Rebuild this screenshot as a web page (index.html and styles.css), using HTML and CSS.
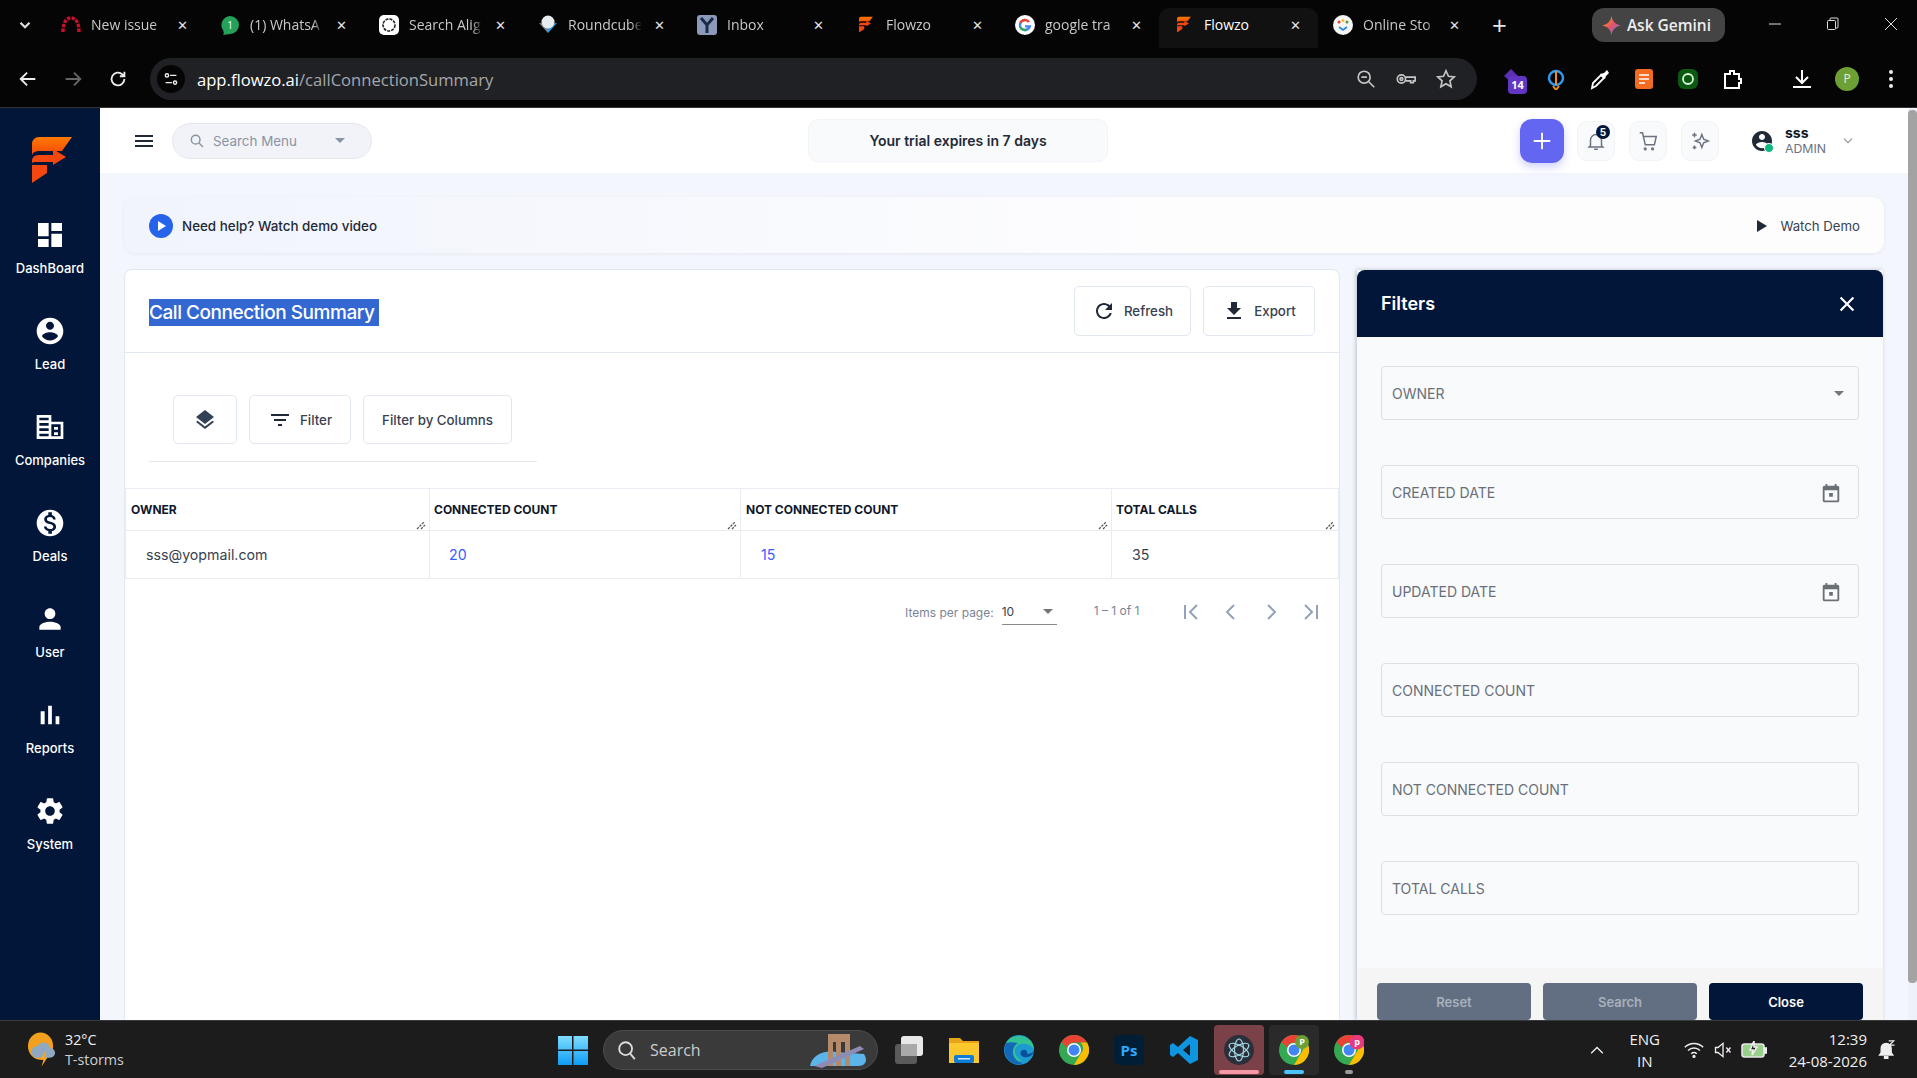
FILE: index.html
```html
<!DOCTYPE html>
<html lang="en">

<head>
  <meta charset="UTF-8">
  <title>Flowzo - Call Connection Summary</title>
  <link rel="stylesheet" href="styles.css">
</head>

<body>
  <!-- browser window -->
  <header class="browser">
    <div class="tabstrip">
      <svg class="tabs-menu" viewBox="0 0 24 24"><path d="M6 9l6 6 6-6" /></svg>
      <div class="tab"><svg class="fav" viewBox="0 0 20 20"><path d="M2 17C2 8 5 3 10 3s8 5 8 14" fill="none" stroke="#c8102e" stroke-width="3.4" stroke-dasharray="3.4 1.2" /></svg><span class="tab-title">New issue</span><span class="tab-x">✕</span></div>
      <div class="tab"><svg class="fav" viewBox="0 0 20 20"><path d="M10 1a9 9 0 0 1 0 18c-2 0-5 1-7 1 1-1 1-3 0-5A9 9 0 0 1 10 1z" fill="#25a25a" /><text x="10" y="14" class="fav-num">1</text></svg><span class="tab-title">(1) WhatsA</span><span class="tab-x">✕</span></div>
      <div class="tab"><svg class="fav" viewBox="0 0 20 20"><rect width="20" height="20" rx="5" fill="#fff" /><circle cx="10" cy="10" r="6" fill="none" stroke="#222" stroke-width="1.6" stroke-dasharray="3 1" /></svg><span class="tab-title">Search Alig</span><span class="tab-x">✕</span></div>
      <div class="tab"><svg class="fav" viewBox="0 0 20 20"><path d="M1 8l9 10V9z" fill="#7d8a94" /><path d="M19 8l-9 10V9z" fill="#2f9be0" /><circle cx="10" cy="7" r="6.5" fill="#e8ecef" /></svg><span class="tab-title">Roundcube</span><span class="tab-x">✕</span></div>
      <div class="tab"><svg class="fav" viewBox="0 0 20 20"><rect width="20" height="20" rx="3" fill="#8b9ab8" /><path d="M4 3l6 7 6-7M10 10v8" fill="none" stroke="#1c2a4a" stroke-width="3" /></svg><span class="tab-title">Inbox</span><span class="tab-x">✕</span></div>
      <div class="tab"><svg class="fav fav-f" viewBox="0 0 40 46"><use href="#flowzo" /></svg><span class="tab-title">Flowzo</span><span class="tab-x">✕</span></div>
      <div class="tab"><svg class="fav" viewBox="0 0 20 20"><circle cx="10" cy="10" r="10" fill="#fff" /><path d="M10 5a5 5 0 1 0 4.8 6.4H10" fill="none" stroke="#4285f4" stroke-width="2.4" /><path d="M5.4 8A5 5 0 0 1 14 7" fill="none" stroke="#ea4335" stroke-width="2.4" /><path d="M5.2 12a5 5 0 0 0 6 2.8" fill="none" stroke="#34a853" stroke-width="2.4" /></svg><span class="tab-title">google tra</span><span class="tab-x">✕</span></div>
      <div class="tab tab-active"><svg class="fav fav-f" viewBox="0 0 40 46"><use href="#flowzo" /></svg><span class="tab-title">Flowzo</span><span class="tab-x">✕</span></div>
      <div class="tab"><svg class="fav" viewBox="0 0 20 20"><circle cx="10" cy="10" r="10" fill="#f5f5f5" /><circle cx="6" cy="7" r="1.5" fill="#e53935" /><circle cx="10" cy="5.5" r="1.5" fill="#fbc02d" /><circle cx="14" cy="7" r="1.5" fill="#43a047" /><path d="M6 12l4 3 4-3" fill="none" stroke="#1e88e5" stroke-width="1.6" /></svg><span class="tab-title">Online Sto</span><span class="tab-x">✕</span></div>
      <span class="new-tab">+</span>
      <div class="gemini"><svg viewBox="0 0 20 20"><defs><linearGradient id="gem" x1="0" y1="0" x2="1" y2="1"><stop offset="0" stop-color="#f4b400" /><stop offset=".5" stop-color="#e8506a" /><stop offset="1" stop-color="#4285f4" /></linearGradient></defs><path d="M10 0c.8 5.5 4 9 10 10-6 1-9.2 4.5-10 10-.8-5.5-4-9-10-10 6-1 9.2-4.5 10-10z" fill="url(#gem)" /></svg>Ask Gemini</div>
      <div class="win-ctrls">
        <svg viewBox="0 0 14 14"><path d="M1 7h12" /></svg>
        <svg viewBox="0 0 14 14"><rect x="1.5" y="3.5" width="8" height="9" rx="1" /><path d="M4 3.5V2a1 1 0 0 1 1-1h6a1 1 0 0 1 1 1v8a1 1 0 0 1-1 1H9.5" /></svg>
        <svg viewBox="0 0 14 14"><path d="M1 1l12 12M13 1L1 13" /></svg>
      </div>
    </div>
    <div class="toolbar">
      <svg class="nav-btn" viewBox="0 0 24 24"><path d="M20 12H5M11 5l-7 7 7 7" /></svg>
      <svg class="nav-btn nav-off" viewBox="0 0 24 24"><path d="M4 12h15M13 5l7 7-7 7" /></svg>
      <svg class="nav-btn" viewBox="0 0 24 24"><path d="M19 12a7 7 0 1 1-2.2-5.1L19 9M19 4v5h-5" /></svg>
      <div class="omnibox">
        <span class="site-info"><svg viewBox="0 0 20 20"><path d="M9 6h7M4 14h7" /><circle cx="5.5" cy="6" r="1.8" /><circle cx="14.5" cy="14" r="1.8" /></svg></span>
        <span class="url">app.flowzo.ai<span class="url-path">/callConnectionSummary</span></span>
        <span class="omni-icons">
          <svg viewBox="0 0 24 24"><circle cx="10" cy="10" r="6.5" /><path d="M15 15l6 6M7 10h6" /></svg>
          <svg viewBox="0 0 24 24"><circle cx="7" cy="12" r="4.5" /><path d="M11.5 10H22v4h-2v2h-3v-2h-5.5" /><circle cx="7" cy="12" r="1.5" /></svg>
          <svg viewBox="0 0 24 24"><path d="M12 3l2.7 6 6.3.7-4.7 4.3 1.3 6.5L12 17.200 6.400 20.500l1.300-6.500L3 9.700 9.300 9z" /></svg>
        </span>
      </div>
      <div class="ext-icons">
        <span class="ext ext-badge"><svg viewBox="0 0 22 22"><path d="M10 1l8 8-8 5-7-6z" fill="#5b2fb5" /></svg><b>14</b></span>
        <span class="ext"><svg viewBox="0 0 22 22"><circle cx="11" cy="10" r="7" fill="none" stroke="#2e9bf0" stroke-width="2.4" /><path d="M11 17V3M8 18l3 4 3-4" fill="none" stroke="#f08a24" stroke-width="2" /></svg></span>
        <span class="ext"><svg viewBox="0 0 22 22"><path d="M3 20l1-5 8-8 3 3-8 8z" fill="none" stroke="#fff" stroke-width="1.8" /><path d="M11 6l5 5 1-3 3-3-2-3-3 3z" fill="#fff" /></svg></span>
        <span class="ext"><svg viewBox="0 0 22 22"><rect x="2" y="1" width="18" height="20" rx="3" fill="#f26b21" /><path d="M6 7h10M6 11h10M6 15h6" stroke="#fff" stroke-width="1.6" /></svg></span>
        <span class="ext"><svg viewBox="0 0 22 22"><rect x="1" y="1" width="20" height="20" rx="6" fill="#0c5a12" /><circle cx="11" cy="11" r="5" fill="none" stroke="#d8f5d8" stroke-width="1.8" /></svg></span>
        <span class="ext"><svg viewBox="0 0 22 22"><path d="M4 6h5V3h4v3h5v5h2v4h-2v5H4z" fill="none" stroke="#fff" stroke-width="2" /></svg></span>
      </div>
      <svg class="download" viewBox="0 0 24 24"><path d="M12 3v12M6 10l6 6 6-6M3 20h18" /></svg>
      <span class="avatar">P</span>
      <span class="kebab"><i></i><i></i><i></i></span>
    </div>
  </header>

  <svg class="sprites" width="0" height="0">
    <defs>
      <linearGradient id="fz" x1="0" y1="0" x2="0" y2="1">
        <stop offset="0" stop-color="#ff7a00" />
        <stop offset="1" stop-color="#f54708" />
      </linearGradient>
      <symbol id="flowzo" viewBox="0 0 40 46">
        <path d="M7 0H40L30 14H7C4 14 1 15 0 18V7C0 3 3 0 7 0z" fill="url(#fz)" />
        <path d="M0 26V24C0 20 3 18 7 18H21V12L34 20L21 28V25H4C2 25 1 25 0 26z" fill="#f4470f" />
        <path d="M0 28H15V36L0 46z" fill="#f4470f" />
      </symbol>
      <symbol id="i-layers" viewBox="0 0 24 24"><path d="M11.99 18.54l-7.37-5.73L3 14.07l9 7 9-7-1.63-1.27-7.38 5.74zM12 16l7.36-5.73L21 9l-9-7-9 7 1.63 1.27L12 16z" /></symbol>
      <symbol id="i-event" viewBox="0 0 24 24"><path d="M19 3h-1V1h-2v2H8V1H6v2H5c-1.11 0-1.99.9-1.99 2L3 19c0 1.1.89 2 2 2h14c1.1 0 2-.9 2-2V5c0-1.1-.9-2-2-2zm0 16H5V8h14v11zM10 11h4v4h-4z" /></symbol>
      <symbol id="i-grip" viewBox="0 0 10 10"><path d="M1 9l7-7M5 9l4-4" fill="none" stroke="#555" stroke-width="1.2" stroke-dasharray="2.5 1" /></symbol>
    </defs>
  </svg>

  <div class="app">
    <aside class="sidebar">
      <svg class="logo" viewBox="0 0 40 46"><use href="#flowzo" /></svg>
      <nav class="side-nav">
        <a class="side-item"><svg viewBox="0 0 24 24"><path d="M3 13h8V3H3v10zm0 8h8v-6H3v6zm10 0h8V11h-8v10zm0-18v6h8V3h-8z" /></svg>DashBoard</a>
        <a class="side-item"><svg viewBox="0 0 24 24"><path d="M12 2C6.48 2 2 6.48 2 12s4.48 10 10 10 10-4.48 10-10S17.52 2 12 2zm0 3c1.66 0 3 1.34 3 3s-1.34 3-3 3-3-1.34-3-3 1.34-3 3-3zm0 14.2c-2.5 0-4.71-1.28-6-3.22.03-1.99 4-3.08 6-3.08 1.99 0 5.97 1.09 6 3.08-1.29 1.94-3.5 3.22-6 3.22z" /></svg>Lead</a>
        <a class="side-item"><svg viewBox="0 0 24 24"><path fill-rule="evenodd" d="M2 3h11v5h9v13H2zM4 5v2h7V5zm0 4v2h7V9zm0 4v2h7v-2zm0 4v2h7v-2zm9-7v9h7v-9zm2 2h3v2h-3zm0 4h3v2h-3z" /></svg>Companies</a>
        <a class="side-item"><svg viewBox="0 0 24 24"><path d="M12 2C6.48 2 2 6.48 2 12s4.48 10 10 10 10-4.48 10-10S17.52 2 12 2zm1.41 16.09V20h-2.67v-1.93c-1.71-.36-3.16-1.46-3.27-3.4h1.96c.1 1.05.82 1.87 2.65 1.87 1.96 0 2.4-.98 2.4-1.59 0-.83-.44-1.61-2.67-2.14-2.48-.6-4.18-1.62-4.18-3.67 0-1.72 1.39-2.84 3.11-3.21V4h2.67v1.95c1.86.45 2.79 1.86 2.85 3.39H14.3c-.05-1.11-.64-1.87-2.22-1.87-1.5 0-2.4.68-2.4 1.64 0 .84.65 1.39 2.67 1.91s4.18 1.39 4.18 3.91c-.01 1.83-1.38 2.83-3.12 3.16z" /></svg>Deals</a>
        <a class="side-item"><svg viewBox="0 0 24 24"><path d="M12 12c2.21 0 4-1.79 4-4s-1.79-4-4-4-4 1.79-4 4 1.79 4 4 4zm0 2c-2.67 0-8 1.34-8 4v2h16v-2c0-2.66-5.33-4-8-4z" /></svg>User</a>
        <a class="side-item"><svg viewBox="0 0 24 24"><path d="M5 9.2h3V19H5zM10.6 5h2.8v14h-2.8zm5.6 8H19v6h-2.8z" /></svg>Reports</a>
        <a class="side-item"><svg viewBox="0 0 24 24"><path d="M19.14 12.94c.04-.3.06-.61.06-.94 0-.32-.02-.64-.07-.94l2.03-1.58c.18-.14.23-.41.12-.61l-1.92-3.32c-.12-.22-.37-.29-.59-.22l-2.39.96c-.5-.38-1.03-.7-1.62-.94l-.36-2.54c-.04-.24-.24-.41-.48-.41h-3.84c-.24 0-.43.17-.47.41l-.36 2.54c-.59.24-1.13.57-1.62.94l-2.39-.96c-.22-.08-.47 0-.59.22L2.74 8.87c-.12.21-.08.47.12.61l2.03 1.58c-.05.3-.09.63-.09.94s.02.64.07.94l-2.03 1.58c-.18.14-.23.41-.12.61l1.92 3.32c.12.22.37.29.59.22l2.39-.96c.5.38 1.03.7 1.62.94l.36 2.54c.05.24.24.41.48.41h3.84c.24 0 .44-.17.47-.41l.36-2.54c.59-.24 1.13-.56 1.62-.94l2.39.96c.22.08.47 0 .59-.22l1.92-3.32c.12-.22.07-.47-.12-.61l-2.01-1.58zM12 15.6c-1.98 0-3.6-1.62-3.6-3.6s1.62-3.6 3.6-3.6 3.6 1.62 3.6 3.6-1.62 3.6-3.6 3.6z" /></svg>System</a>
      </nav>
    </aside>

    <div class="page">
      <div class="topbar">
        <button class="hamburger"><i></i><i></i><i></i></button>
        <div class="menu-search">
          <svg viewBox="0 0 24 24"><circle cx="10" cy="10" r="6.5" /><path d="M15 15l6 6" /></svg>
          <span>Search Menu</span>
          <i class="caret"></i>
        </div>
        <div class="trial">Your trial expires in 7 days</div>
        <div class="top-actions">
          <button class="add-btn"><svg viewBox="0 0 24 24"><path d="M12 3v18M3 12h18" /></svg></button>
          <button class="round-btn"><svg viewBox="0 0 24 24"><path d="M6 17V11a6 6 0 0 1 12 0v6l1.5 1.5h-15zM10 21h4" /></svg><b class="notif">5</b></button>
          <button class="round-btn"><svg viewBox="0 0 24 24"><path d="M3 3h3l3 13h10l2-9H7M10 20.5a1 1 0 1 0 0 .1M18 20.5a1 1 0 1 0 0 .1" /></svg></button>
          <button class="round-btn"><svg viewBox="0 0 24 24"><path d="M14 5l2 5 5 2-5 2-2 5-2-5-5-2 5-2zM6 3v5M3.5 5.5h5M6 17v4M4 19h4" /></svg></button>
        </div>
        <div class="user">
          <span class="user-pic"><svg viewBox="0 0 24 24"><path d="M12 2C6.48 2 2 6.48 2 12s4.48 10 10 10 10-4.48 10-10S17.52 2 12 2zm0 3c1.66 0 3 1.34 3 3s-1.34 3-3 3-3-1.34-3-3 1.34-3 3-3zm0 14.2c-2.5 0-4.71-1.28-6-3.22.03-1.99 4-3.08 6-3.08 1.99 0 5.97 1.09 6 3.08-1.29 1.94-3.5 3.22-6 3.22z" /></svg><i class="online"></i></span>
          <span class="user-text"><b>sss</b><span>ADMIN</span></span>
          <svg class="user-caret" viewBox="0 0 24 24"><path d="M5 8l7 7 7-7" /></svg>
        </div>
      </div>

      <div class="content">
        <section class="help-banner">
          <span class="play-dot"></span>
          <span class="help-text">Need help? Watch demo video</span>
          <span class="watch"><i></i>Watch Demo</span>
        </section>

        <div class="columns">
          <section class="card">
            <div class="card-head">
              <h1><span class="selected">Call Connection Summary</span></h1>
              <div class="head-btns">
                <button class="btn btn-refresh"><svg viewBox="0 0 24 24"><path d="M17.65 6.35C16.2 4.9 14.21 4 12 4c-4.42 0-7.99 3.58-7.99 8s3.57 8 7.99 8c3.73 0 6.84-2.55 7.73-6h-2.08c-.82 2.33-3.04 4-5.65 4-3.31 0-6-2.69-6-6s2.69-6 6-6c1.66 0 3.14.69 4.22 1.78L13 11h7V4l-2.35 2.35z" /></svg>Refresh</button>
                <button class="btn btn-export"><svg viewBox="0 0 24 24"><path d="M19 9h-4V3H9v6H5l7 7 7-7zM5 18v2h14v-2H5z" /></svg>Export</button>
              </div>
            </div>

            <div class="tools">
              <button class="btn btn-layers"><svg viewBox="0 0 24 24"><use href="#i-layers" /></svg></button>
              <button class="btn btn-filter"><svg viewBox="0 0 24 24"><path d="M10 18h4v-2h-4v2zM3 6v2h18V6H3zm3 7h12v-2H6v2z" /></svg>Filter</button>
              <button class="btn btn-cols">Filter by Columns</button>
            </div>

            <table class="grid">
              <colgroup>
                <col class="col-a"><col class="col-b"><col class="col-c"><col class="col-d">
              </colgroup>
              <thead>
                <tr>
                  <th>OWNER<svg class="grip"><use href="#i-grip" /></svg></th>
                  <th>CONNECTED COUNT<svg class="grip"><use href="#i-grip" /></svg></th>
                  <th>NOT CONNECTED COUNT<svg class="grip"><use href="#i-grip" /></svg></th>
                  <th>TOTAL CALLS<svg class="grip"><use href="#i-grip" /></svg></th>
                </tr>
              </thead>
              <tbody>
                <tr>
                  <td>sss@yopmail.com</td>
                  <td class="link">20</td>
                  <td class="link">15</td>
                  <td>35</td>
                </tr>
              </tbody>
            </table>

            <div class="pager">
              <span class="pager-label">Items per page:</span>
              <span class="pager-select">10<i class="caret"></i></span>
              <span class="pager-range">1 – 1 of 1</span>
              <span class="pager-btns">
                <svg viewBox="0 0 24 24"><path d="M6 5v14M18 5l-7 7 7 7" /></svg>
                <svg viewBox="0 0 24 24"><path d="M15 5l-7 7 7 7" /></svg>
                <svg viewBox="0 0 24 24"><path d="M9 5l7 7-7 7" /></svg>
                <svg viewBox="0 0 24 24"><path d="M18 5v14M6 5l7 7-7 7" /></svg>
              </span>
            </div>
          </section>

          <aside class="filters">
            <div class="filters-head">
              <h2>Filters</h2>
              <svg viewBox="0 0 24 24"><path d="M5 5l14 14M19 5L5 19" /></svg>
            </div>
            <div class="filters-body">
              <div class="field">OWNER<i class="caret"></i></div>
              <div class="field">CREATED DATE<svg viewBox="0 0 24 24"><use href="#i-event" /></svg></div>
              <div class="field">UPDATED DATE<svg viewBox="0 0 24 24"><use href="#i-event" /></svg></div>
              <div class="field">CONNECTED COUNT</div>
              <div class="field">NOT CONNECTED COUNT</div>
              <div class="field">TOTAL CALLS</div>
            </div>
            <div class="filters-foot">
              <button class="foot-btn">Reset</button>
              <button class="foot-btn">Search</button>
              <button class="foot-btn foot-close">Close</button>
            </div>
          </aside>
        </div>
      </div>
    </div>

    <div class="scrollbar"><i></i></div>
  </div>

  <!-- windows taskbar -->
  <footer class="taskbar">
    <div class="weather">
      <svg viewBox="0 0 30 36"><ellipse cx="14" cy="14" rx="13" ry="14" fill="#f2a01e" /><path d="M10 26a6 6 0 0 1 1-12 7 7 0 0 1 13 2 5 5 0 0 1 0 10z" fill="#8fa9c2" /><path d="M18 20l-4 8h3l-2 7 6-9h-3l2-6z" fill="#f5a623" /></svg>
      <span class="weather-text"><span>32°C</span><span class="dim">T-storms</span></span>
    </div>
    <div class="dock">
      <svg class="winlogo" viewBox="0 0 30 30"><defs><linearGradient id="win" x1="0" y1="0" x2="0" y2="1"><stop offset="0" stop-color="#7fdcff" /><stop offset="1" stop-color="#0f9df5" /></linearGradient></defs><path fill="url(#win)" d="M0 1h14v13.5H0zM15.5 1H30v13.5H15.5zM0 16h14v14H0zM15.5 16H30v14H15.5z" /></svg>
      <div class="task-search">
        <svg viewBox="0 0 24 24"><circle cx="10.5" cy="10.5" r="7" /><path d="M15.5 16l5 6" /></svg>
        <span>Search</span>
        <svg class="bridge" viewBox="0 0 60 36"><path d="M2 34c2-10 12-16 26-14l28 2c4 6 2 12-6 12z" fill="#5cb4ea" /><path d="M20 2h22v32h-5V10h-4v24h-5V10h-3v24h-5z" fill="#b48a6a" /><path d="M6 34l46-20 4 3-42 19z" fill="#8e8bb5" /></svg>
      </div>
      <div class="task-apps">
        <span class="app-slot"><svg viewBox="0 0 30 30"><rect x="1" y="9" width="22" height="20" rx="3" fill="#5a5a5a" /><rect x="7" y="1" width="22" height="20" rx="3" fill="#e8e8e8" /><rect x="7" y="9" width="16" height="12" fill="#a9a9a9" /></svg></span>
        <span class="app-slot"><svg viewBox="0 0 30 30"><path d="M0 3h11l3 3h16v22H0z" fill="#e8a317" /><rect y="8" width="30" height="20" fill="#fdc72e" /><rect x="5" y="20" width="20" height="8" rx="2" fill="#0f7dd4" /><rect x="9" y="23" width="12" height="1.5" fill="#cfe8fb" /></svg></span>
        <span class="app-slot"><svg viewBox="0 0 30 30"><circle cx="15" cy="15" r="15" fill="#1d9bd1" /><path d="M30 15c0 5-5 8-10 7-4-1-5-6-1-7 3-1 5 2 4 4 5 0 7-3 7-4z" fill="#0b4f9c" /><path d="M2 8C6 0 20-2 27 6c3 4 3 8 3 9-2-5-8-7-13-6-5 1-7 5-6 9 1 3 3 6 7 8C10 27 2 20 2 8z" fill="#36c98a" opacity=".85" /><path d="M2 8c-4 9 1 18 9 21 3 1 6 1 7-1-5-1-10-6-9-13 1-4 3-6 5-7C9 7 5 7 2 8z" fill="#1468b8" /></svg></span>
        <span class="app-slot"><svg viewBox="0 0 30 30"><use href="#chrome" /></svg></span>
        <span class="app-slot"><svg viewBox="0 0 30 30"><rect width="30" height="30" rx="5" fill="#001e36" /><text x="15" y="21" class="ps">Ps</text></svg></span>
        <span class="app-slot"><svg viewBox="0 0 30 30"><path d="M21 1l8 4v20l-8 4-12-11-5 4-3-2v-10l3-2 5 4zM21 9l-7 6 7 6z" fill="#0f95e0" /></svg></span>
        <span class="app-slot slot-on"><svg viewBox="0 0 30 30"><circle cx="15" cy="15" r="15" fill="#2b2f3a" /><g fill="none" stroke="#9fd4e0" stroke-width="1.2"><ellipse cx="15" cy="15" rx="11" ry="4.5" transform="rotate(30 15 15)" /><ellipse cx="15" cy="15" rx="11" ry="4.5" transform="rotate(90 15 15)" /><ellipse cx="15" cy="15" rx="11" ry="4.5" transform="rotate(150 15 15)" /></g></svg><i class="run-pink"></i></span>
        <span class="app-slot slot-open"><svg viewBox="0 0 30 30"><use href="#chrome" /><circle cx="23" cy="7" r="7" fill="#6d9f35" /><text x="23" y="10" class="pin">P</text></svg><i class="run-blue"></i></span>
        <span class="app-slot"><svg viewBox="0 0 30 30"><use href="#chrome" /><circle cx="23" cy="7" r="7.5" fill="#e8397e" /><text x="23" y="10" class="pin">p</text></svg><i class="run-gray"></i></span>
      </div>
    </div>
    <div class="tray">
      <svg class="tray-up" viewBox="0 0 24 24"><path d="M5 16l7-7 7 7" /></svg>
      <span class="lang">ENG<br>IN</span>
      <svg class="tray-wifi" viewBox="0 0 24 24"><path d="M2 9a14 14 0 0 1 20 0M5.5 12.5a9 9 0 0 1 13 0M9 16a4 4 0 0 1 6 0" /><circle cx="12" cy="19" r="1" /></svg>
      <svg class="tray-snd" viewBox="0 0 24 24"><path d="M3 9v6h3l6 5V4L6 9zM16 9l5 6M21 9l-5 6" /></svg>
      <svg class="tray-bat" viewBox="0 0 26 18"><rect x="1" y="3" width="22" height="13" rx="2.5" fill="#97d18b" stroke="#e8e8e8" /><rect x="23.5" y="7" width="2" height="5" fill="#e8e8e8" /><path d="M13 0l-4 9h3l-1 5 5-8h-3z" fill="#1c1c1c" /></svg>
      <span class="clock"><span>12:39</span><span>24-08-2026</span></span>
      <svg class="tray-bell" viewBox="0 0 24 24"><path d="M11 4a6 6 0 0 0-6 6v5l-2 3h16l-2-3v-5a6 6 0 0 0-6-6zM9 20h4v2H9z" fill="#eee" /><path d="M14 1h6l-5 5h6" fill="none" stroke="#eee" stroke-width="1.5" /></svg>
    </div>
  </footer>

  <svg class="sprites" width="0" height="0">
    <symbol id="chrome" viewBox="0 0 30 30">
      <circle cx="15" cy="15" r="15" fill="#34a853" />
      <path d="M15 0a15 15 0 0 1 13 7.5H15a7.5 7.5 0 0 0-7 5L2.5 7A15 15 0 0 1 15 0z" fill="#ea4335" />
      <path d="M28 7.5A15 15 0 0 1 15 30l6.5-11a7.5 7.5 0 0 0 0-11.500z" fill="#fbbc04" />
      <circle cx="15" cy="15" r="7" fill="#fff" />
      <circle cx="15" cy="15" r="5.5" fill="#4285f4" />
    </symbol>
  </svg>
</body>

</html>
```

FILE: styles.css
```css
* {
  box-sizing: border-box;
}

html,
body {
  height: 100%;
  margin: 0;
  overflow: hidden;
}

body {
  display: flex;
  flex-direction: column;
  font-family: Inter, "Liberation Sans", sans-serif;
  color: #1f2937;
  background-color: #f3f6fd;
}

button {
  font: inherit;
  padding: 0;
  border: 0;
  background: none;
}

h1,
h2 {
  margin: 0;
}

.sprites {
  position: absolute;
}

/* browser */
.browser {
  flex: none;
  height: 108px;
  background-color: #050505;
  border-bottom: 1px solid #333;
  font-family: "Open Sans", "Noto Sans", sans-serif;
  color: #e6e6e6;
}

.tabstrip {
  display: flex;
  align-items: flex-start;
  height: 48px;
  padding-left: 16px;
}

.tabs-menu {
  flex: none;
  width: 18px;
  height: 18px;
  margin: 16px 12px 0 0;
  fill: none;
  stroke: #ddd;
  stroke-width: 3;
}

.tab {
  flex: none;
  display: flex;
  align-items: center;
  width: 159px;
  height: 40px;
  margin-top: 8px;
  padding: 0 0 7px 15px;
  border-radius: 10px 10px 0 0;
  font-size: 14px;
}

.tab-active {
  background-color: #111;
  color: #fff;
}

.fav {
  flex: none;
  width: 20px;
  height: 20px;
  margin-right: 10px;
}

.fav-f {
  width: 14px;
  height: 17px;
  margin: 0 13px 0 3px;
}

.fav-num {
  font-size: 10px;
  fill: #fff;
  text-anchor: middle;
}

.tab-title {
  width: 74px;
  white-space: nowrap;
  color: #c9c9c9;
  mask-image: linear-gradient(90deg, #000 85%, transparent);
}

.tab-active .tab-title {
  color: #fff;
  mask-image: none;
}

.tab-x {
  margin-left: 12px;
  font-size: 13px;
  color: #e4e4e4;
}

.new-tab {
  flex: none;
  margin: 12px 0 0 15px;
  font-size: 26px;
  font-weight: 400;
  line-height: 1;
}

.gemini {
  flex: none;
  display: flex;
  align-items: center;
  gap: 6px;
  width: 133px;
  height: 34px;
  margin: 8px 0 0 85px;
  padding-left: 10px;
  border-radius: 12px;
  background-color: #444;
  font-size: 15.5px;
  font-weight: 600;
  color: #eee;
}

.gemini svg {
  width: 19px;
  height: 19px;
}

.win-ctrls {
  display: flex;
  gap: 44px;
  margin: 17px 0 0 43px;
}

.win-ctrls svg {
  width: 14px;
  height: 14px;
  fill: none;
  stroke: #ddd;
}

.toolbar {
  display: flex;
  align-items: center;
  height: 42px;
  margin-top: 10px;
  padding-left: 17px;
}

.nav-btn {
  flex: none;
  width: 22px;
  height: 22px;
  margin-right: 23px;
  fill: none;
  stroke: #eee;
  stroke-width: 2;
}

.nav-off {
  stroke: #666;
}

.omnibox {
  flex: none;
  display: flex;
  align-items: center;
  width: 1327px;
  height: 42px;
  margin-left: -2px;
  padding-left: 7px;
  border-radius: 21px;
  background-color: #202124;
}

.site-info {
  display: flex;
  align-items: center;
  justify-content: center;
  width: 28px;
  height: 28px;
  border-radius: 50%;
  background-color: #050505;
}

.site-info svg {
  width: 18px;
  height: 18px;
  fill: none;
  stroke: #eee;
  stroke-width: 1.6;
}

.url {
  margin-left: 12px;
  font-size: 16.6px;
  color: #fff;
}

.url-path {
  color: #a5a7ab;
}

.omni-icons {
  display: flex;
  gap: 18px;
  margin-left: auto;
  margin-right: 20px;
}

.omni-icons svg {
  width: 22px;
  height: 22px;
  fill: none;
  stroke: #c4c7c5;
  stroke-width: 1.8;
}

.ext-icons {
  display: flex;
  gap: 22px;
  margin-left: 24px;
}

.ext {
  position: relative;
  width: 22px;
  height: 22px;
}

.ext svg {
  display: block;
  width: 22px;
  height: 22px;
}

.ext-badge b {
  position: absolute;
  left: 7px;
  top: 8px;
  width: 19px;
  height: 18px;
  border-radius: 4px;
  background-color: #6236c4;
  font-size: 11px;
  line-height: 18px;
  text-align: center;
  color: #fff;
}

.download {
  flex: none;
  width: 24px;
  height: 24px;
  margin-left: 47px;
  fill: none;
  stroke: #fff;
  stroke-width: 2;
}

.avatar {
  flex: none;
  width: 24px;
  height: 24px;
  margin-left: 21px;
  border-radius: 50%;
  background-color: #6d9f35;
  font-size: 12px;
  line-height: 24px;
  text-align: center;
  color: #e9f3dc;
}

.kebab {
  flex: none;
  display: flex;
  flex-direction: column;
  gap: 3px;
  margin-left: 30px;
}

.kebab i {
  width: 4px;
  height: 4px;
  border-radius: 50%;
  background-color: #eee;
}

/* app shell */
.app {
  flex: 1;
  display: flex;
  min-height: 0;
  overflow: hidden;
}

.sidebar {
  flex: none;
  width: 100px;
  background-color: #021639;
  color: #fff;
}

.logo {
  display: block;
  width: 40px;
  height: 46px;
  margin: 29px 0 0 32px;
}

.side-nav {
  margin-top: 36px;
}

.side-item {
  display: flex;
  flex-direction: column;
  align-items: center;
  height: 96px;
  font-size: 13px;
  font-weight: 500;
}

.side-item svg {
  width: 32px;
  height: 32px;
  margin-bottom: 9px;
  fill: #fff;
}

.page {
  flex: 1;
  display: flex;
  flex-direction: column;
  min-width: 0;
}

.scrollbar {
  flex: none;
  width: 9px;
  background-color: #eef1f7;
}

.scrollbar i {
  display: block;
  height: 873px;
  margin-top: 2px;
  border-radius: 4px;
  background-color: #a3a3a3;
}

/* top bar */
.topbar {
  flex: none;
  display: flex;
  align-items: center;
  height: 65px;
  background-color: #fff;
}

.hamburger {
  display: flex;
  flex-direction: column;
  gap: 3px;
  width: 18px;
  margin-left: 35px;
}

.hamburger i {
  height: 2px;
  background-color: #1f2937;
}

.menu-search {
  display: flex;
  align-items: center;
  width: 200px;
  height: 36px;
  margin-left: 19px;
  padding-left: 16px;
  border: 1px solid #e5e7eb;
  border-radius: 18px;
  background-color: #f1f3f8;
  font-size: 13.4px;
  color: #8a93a3;
}

.menu-search svg {
  width: 16px;
  height: 16px;
  margin-right: 8px;
  fill: none;
  stroke: #8a93a3;
  stroke-width: 2.2;
}

.caret {
  width: 0;
  height: 0;
  border-left: 5px solid transparent;
  border-right: 5px solid transparent;
  border-top: 5px solid #757575;
}

.menu-search .caret {
  margin-left: 38px;
  border-top-color: #8a93a3;
}

.trial {
  width: 300px;
  height: 43px;
  margin-left: 436px;
  border: 1px solid #f1f5f9;
  border-radius: 10px;
  background-color: #f8fafc;
  font-size: 14px;
  font-weight: 600;
  line-height: 41px;
  text-align: center;
  color: #1f2937;
}

.top-actions {
  display: flex;
  align-items: center;
  margin-left: 412px;
}

.add-btn {
  width: 44px;
  height: 44px;
  margin-right: 13px;
  border-radius: 12px;
  background-color: #6366f1;
  box-shadow: 0 4px 8px rgba(99, 102, 241, .3);
}

.add-btn svg {
  display: block;
  width: 22px;
  height: 22px;
  margin: auto;
  fill: none;
  stroke: #fff;
  stroke-width: 2;
}

.round-btn {
  position: relative;
  width: 38px;
  height: 40px;
  margin-right: 14px;
  border: 1px solid #f1f3f7;
  border-radius: 10px;
  background-color: #f8fafc;
}

.round-btn svg {
  display: block;
  width: 22px;
  height: 22px;
  margin: auto;
  fill: none;
  stroke: #6b7280;
  stroke-width: 1.6;
}

.notif {
  position: absolute;
  top: 3px;
  right: 4px;
  width: 14px;
  height: 14px;
  border-radius: 50%;
  background-color: #021639;
  font-size: 10px;
  line-height: 14px;
  color: #fff;
}

.user {
  display: flex;
  align-items: center;
  margin-left: 17px;
}

.user-pic {
  position: relative;
  width: 24px;
  height: 24px;
}

.user-pic svg {
  display: block;
  width: 24px;
  height: 24px;
  fill: #1f2937;
}

.online {
  position: absolute;
  right: 0;
  bottom: 0;
  width: 10px;
  height: 10px;
  border: 1px solid #fff;
  border-radius: 50%;
  background-color: #10b981;
}

.user-text {
  display: flex;
  flex-direction: column;
  margin-left: 11px;
  font-size: 12.3px;
  line-height: 16px;
  color: #6b7280;
}

.user-text b {
  font-size: 14px;
  color: #111827;
}

.user-caret {
  width: 14px;
  height: 14px;
  margin-left: 15px;
  fill: none;
  stroke: #8b93a1;
  stroke-width: 2;
}

/* content */
.content {
  flex: 1;
  min-height: 0;
  padding: 24px 24px 0;
}

.help-banner {
  display: flex;
  align-items: center;
  height: 56px;
  padding: 2px 24px 0;
  border-radius: 12px;
  background: linear-gradient(90deg, #f1f4fd, #fdfdfe 60%);
  box-shadow: 0 1px 4px rgba(15, 23, 42, .06);
}

.play-dot {
  position: relative;
  width: 24px;
  height: 24px;
  margin-left: 1px;
  border-radius: 50%;
  background-color: #2563eb;
}

.play-dot::after {
  content: "";
  position: absolute;
  left: 9px;
  top: 7px;
  border-left: 8px solid #fff;
  border-top: 5px solid transparent;
  border-bottom: 5px solid transparent;
}

.help-text {
  margin-left: 9px;
  font-size: 13.4px;
  font-weight: 500;
}

.watch {
  display: flex;
  align-items: center;
  margin-left: auto;
  font-size: 13.2px;
  color: #374151;
}

.watch i {
  margin-right: 13px;
  border-left: 10px solid #1f2937;
  border-top: 6px solid transparent;
  border-bottom: 6px solid transparent;
}

.columns {
  display: flex;
  gap: 17px;
  margin-top: 16px;
  height: 760px;
}

.card {
  flex: none;
  width: 1216px;
  border: 1px solid #e2e8f0;
  border-radius: 8px 8px 0 0;
  background-color: #fff;
}

.card-head {
  display: flex;
  align-items: center;
  justify-content: space-between;
  height: 83px;
  padding: 0 24px;
  border-bottom: 1px solid #e2e8f0;
}

h1 {
  padding-top: 2px;
  font-size: 19px;
  font-weight: 500;
  line-height: 27px;
  letter-spacing: -.45px;
}

.selected {
  display: inline-block;
  padding-right: 5px;
  background-color: #3367d1;
  color: #fff;
}

.head-btns {
  display: flex;
  gap: 12px;
}

.btn {
  display: flex;
  align-items: center;
  justify-content: center;
  border: 1px solid #e2e8f0;
  border-radius: 5px;
  background-color: #fff;
  font-size: 13.3px;
  font-weight: 500;
  color: #374151;
}

.btn svg {
  fill: #1f2937;
}

.btn-refresh,
.btn-export {
  height: 50px;
}

.btn-refresh {
  width: 117px;
}

.btn-export {
  width: 112px;
}

.btn-refresh svg,
.btn-export svg {
  width: 24px;
  height: 24px;
  margin-right: 8px;
}

.tools {
  display: flex;
  gap: 12px;
  width: 388px;
  height: 109px;
  margin-left: 24px;
  padding: 42px 0 0 24px;
  border-bottom: 1px solid #e2e8f0;
}

.tools .btn {
  height: 49px;
}

.btn-layers {
  width: 64px;
}

.btn-layers svg {
  width: 24px;
  height: 24px;
  fill: #334155;
}

.btn-filter {
  width: 102px;
}

.btn-filter svg {
  width: 24px;
  height: 24px;
  margin-right: 8px;
}

.btn-cols {
  width: 149px;
}

.grid {
  width: 1213px;
  margin-top: 26px;
  border-collapse: collapse;
  table-layout: fixed;
}

.col-a {
  width: 304px;
}

.col-b {
  width: 311px;
}

.col-c {
  width: 371px;
}

.col-d {
  width: 227px;
}

.grid th,
.grid td {
  border: 1px solid #e9edf3;
  text-align: left;
}

.grid th {
  position: relative;
  height: 42px;
  padding: 0 0 0 5px;
  font-size: 12px;
  font-weight: 700;
  color: #0f172a;
}

.grid th:nth-child(2),
.grid th:nth-child(4) {
  padding-left: 4px;
}

.grip {
  position: absolute;
  right: 3px;
  bottom: 0;
  width: 10px;
  height: 10px;
}

.grid td {
  height: 48px;
  padding-left: 20px;
  font-size: 14.2px;
  color: #374151;
}

.grid .link {
  color: #3b5bfd;
}

.grid td:nth-child(2) {
  padding-left: 19px;
}

.pager {
  display: flex;
  align-items: center;
  height: 66px;
  padding-left: 780px;
  font-size: 12px;
  color: #7b8494;
  white-space: nowrap;
}

.pager-select {
  flex: none;
  display: flex;
  align-items: center;
  justify-content: space-between;
  width: 55px;
  height: 26px;
  margin-left: 8px;
  padding-right: 4px;
  border-bottom: 1px solid #8a8a8a;
  color: #374151;
}

.pager-range {
  flex: none;
  margin-left: 37px;
  margin-bottom: 3px;
}

.pager-btns {
  flex: none;
  display: flex;
  gap: 16px;
  margin-left: 40px;
}

.pager-btns svg {
  width: 24px;
  height: 24px;
  fill: none;
  stroke: #94a3b8;
  stroke-width: 2;
}

/* filter panel */
.filters {
  flex: none;
  display: flex;
  flex-direction: column;
  width: 526px;
  height: 750px;
  margin-top: 1px;
  background-color: #f8fafc;
  box-shadow: -1px 0 4px rgba(15, 23, 42, .25);
}

.filters-head {
  flex: none;
  display: flex;
  align-items: center;
  justify-content: space-between;
  height: 67px;
  padding: 0 24px;
  border-radius: 8px 8px 0 0;
  background-color: #021639;
  color: #fff;
}

h2 {
  font-size: 18px;
  font-weight: 600;
}

.filters-head svg {
  width: 22px;
  height: 22px;
  margin-right: 1px;
  fill: none;
  stroke: #fff;
  stroke-width: 2.4;
}

.filters-body {
  flex: 1;
  display: flex;
  flex-direction: column;
  gap: 45px;
  padding: 29px 24px 0 24px;
}

.field {
  display: flex;
  align-items: center;
  justify-content: space-between;
  height: 54px;
  padding: 0 14px 0 10px;
  border: 1px solid #dcdfe5;
  border-radius: 4px;
  font-size: 14px;
  color: #696f78;
}

.field svg {
  width: 22px;
  height: 22px;
  margin: 3px 2px 0 0;
  fill: #6b7075;
}

.filters-foot {
  flex: none;
  display: flex;
  gap: 12px;
  height: 52px;
  padding: 15px 20px 0 20px;
  background-color: #f5f5f5;
}

.foot-btn {
  flex: 1;
  height: 37px;
  border-radius: 4px;
  background-color: #626f82;
  font-size: 13px;
  font-weight: 600;
  color: #a7b0bd;
}

.foot-close {
  background-color: #021639;
  color: #fff;
}

/* taskbar */
.taskbar {
  flex: none;
  position: relative;
  display: flex;
  align-items: center;
  height: 58px;
  border-top: 1px solid #3a3a3a;
  background-color: #1c1c1c;
  font-family: "Open Sans", "Noto Sans", sans-serif;
  color: #f0f0f0;
}

.weather {
  flex: none;
  display: flex;
  align-items: center;
  width: 558px;
  padding-left: 27px;
}

.weather svg {
  width: 29px;
  height: 36px;
  margin-right: 9px;
}

.weather-text {
  display: flex;
  flex-direction: column;
  font-size: 14.3px;
  line-height: 20px;
}

.dim {
  color: #cfcfcf;
}

.dock {
  flex: none;
  display: flex;
  align-items: center;
}

.winlogo {
  width: 30px;
  height: 30px;
}

.task-search {
  display: flex;
  align-items: center;
  width: 275px;
  height: 40px;
  margin-left: 15px;
  padding: 0 8px 0 12px;
  border: 1px solid #4c4c4c;
  border-radius: 20px;
  background-color: #3a3a3a;
  font-size: 16px;
  color: #ccc;
}

.task-search svg {
  width: 22px;
  height: 22px;
  margin-right: 12px;
  fill: none;
  stroke: #ddd;
  stroke-width: 2;
}

.task-search .bridge {
  width: 62px;
  height: 36px;
  margin: 0 0 0 auto;
  stroke: none;
}

.task-apps {
  display: flex;
  gap: 5px;
  margin-left: 6px;
}

.app-slot {
  position: relative;
  display: flex;
  align-items: center;
  justify-content: center;
  width: 50px;
  height: 50px;
  border-radius: 4px;
}

.app-slot svg {
  width: 30px;
  height: 30px;
}

.slot-on {
  background-color: #7a4248;
}

.slot-open {
  background-color: #2a2a2a;
}

.app-slot i {
  position: absolute;
  bottom: 1px;
  left: 50%;
  height: 4px;
  border-radius: 2px;
  transform: translateX(-50%);
}

.run-pink {
  width: 40px;
  background-color: #f59aa4;
}

.run-blue {
  width: 20px;
  background-color: #4cc2ff;
}

.run-gray {
  width: 8px;
  background-color: #9a9a9a;
}

.ps {
  font-size: 15px;
  font-weight: 700;
  fill: #31a8ff;
  text-anchor: middle;
}

.pin {
  font-size: 9px;
  font-weight: 700;
  fill: #fff;
  text-anchor: middle;
}

.tray {
  flex: 1;
  display: flex;
  align-items: center;
  justify-content: flex-end;
  padding-right: 20px;
}

.tray svg {
  fill: none;
  stroke: #eee;
  stroke-width: 1.6;
}

.tray-up {
  width: 20px;
  height: 20px;
}

.lang {
  width: 40px;
  margin: 0 18px;
  font-size: 15px;
  line-height: 22px;
  text-align: center;
}

.tray-wifi {
  width: 22px;
  height: 22px;
}

.tray-snd {
  width: 20px;
  height: 20px;
  margin-left: 8px;
}

.tray-bat {
  width: 26px;
  height: 18px;
  margin-left: 8px;
  stroke-width: 1;
}

.clock {
  display: flex;
  flex-direction: column;
  align-items: flex-end;
  margin-left: 22px;
  font-size: 15px;
  line-height: 22px;
}

.tray-bell {
  width: 20px;
  height: 20px;
  margin-left: 10px;
  stroke: none;
}
```
